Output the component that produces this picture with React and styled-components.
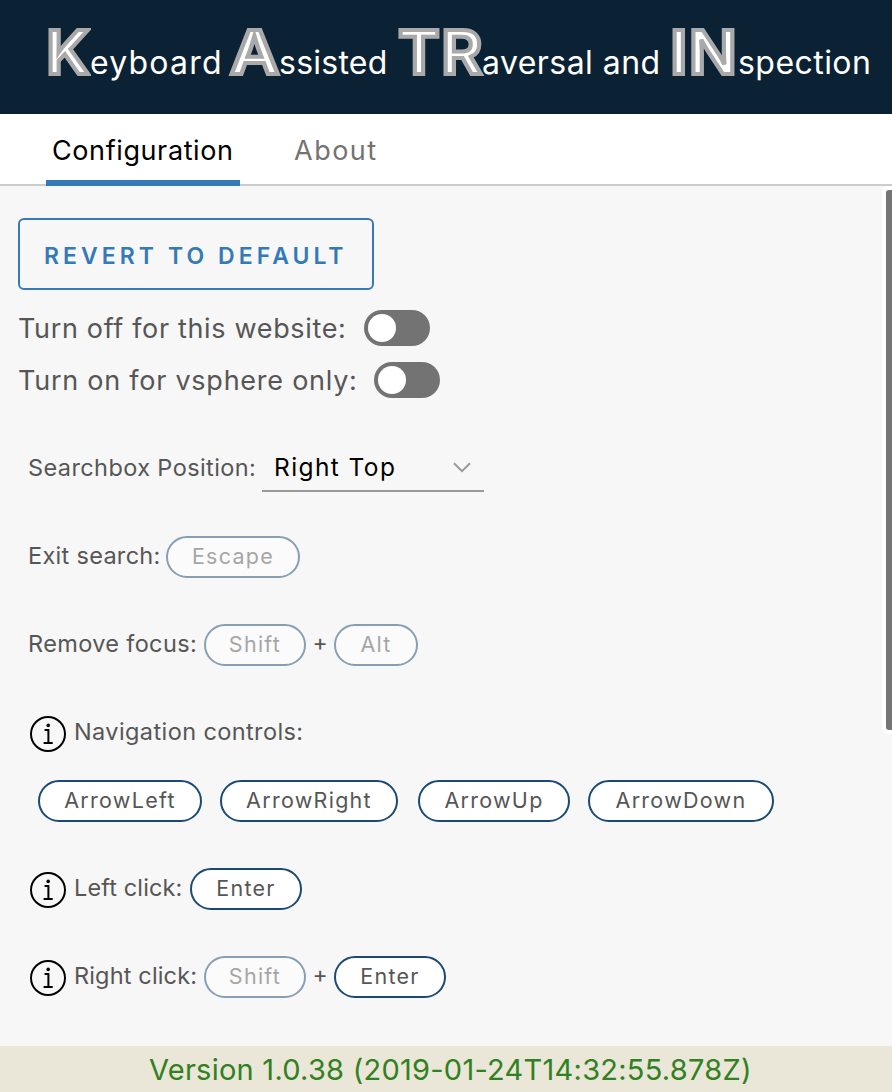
import React from 'react';
import styled, { createGlobalStyle } from 'styled-components';

const GlobalStyle = createGlobalStyle`
  * { box-sizing: border-box; }
  body {
    margin: 0;
    font-family: Inter, "Liberation Sans", sans-serif;
    color: #565656;
    font-variant-ligatures: none;
  }
`;

const Page = styled.div`
  display: flex;
  flex-direction: column;
  width: 892px;
  height: 1092px;
  overflow: hidden;
  background: #f7f7f7;
`;

const Header = styled.header`
  flex: none;
  display: flex;
  align-items: baseline;
  height: 114px;
  padding: 14px 0 0 46px;
  background: #0b2235;
  color: #fff;
  white-space: pre;
`;

const Initial = styled.span`
  flex: none;
  width: ${(p) => p.$w}px;
  font-size: 60.5px;
  line-height: 76px;
  font-weight: 600;
  letter-spacing: ${(p) => p.$ls || 0}px;
  -webkit-text-stroke: 4px #a9a9a9;
  transform: scaleX(${(p) => p.$stretch || 1});
  transform-origin: left;
`;

const Rest = styled.span`
  flex: none;
  width: ${(p) => p.$w}px;
  font-size: 32px;
  letter-spacing: ${(p) => p.$ls}px;
`;

const TabBar = styled.nav`
  flex: none;
  display: flex;
  gap: 48px;
  height: 72px;
  padding-left: 46px;
  background: #fff;
  box-shadow: inset 0 -2px #ccc;
`;

const Tab = styled.div`
  width: ${(p) => p.$w}px;
  height: 72px;
  padding: 2px 0 0 6px;
  font-size: 27px;
  line-height: 70px;
  letter-spacing: ${(p) => p.$ls}px;
  color: ${(p) => (p.$active ? '#000' : '#737373')};
  box-shadow: ${(p) => (p.$active ? 'inset 0 -6px #347ab8' : 'none')};
  white-space: nowrap;
`;

const Content = styled.main`
  position: relative;
  flex: 1;
  min-height: 0;
  padding: 32px 0 0 18px;
`;

const ScrollThumb = styled.div`
  position: absolute;
  top: 0;
  right: -8px;
  width: 18px;
  height: 548px;
  border: 4px solid #fff;
  border-radius: 7px;
  background: #757575;
`;

const RevertButton = styled.button`
  display: block;
  width: 356px;
  height: 72px;
  padding: 3px 0 0 24px;
  border: 2px solid #347ab8;
  border-radius: 6px;
  background: transparent;
  color: #347ab8;
  font: 600 23px Inter, sans-serif;
  letter-spacing: 4.05px;
  text-align: left;
  white-space: nowrap;
`;

const ToggleRow = styled.label`
  display: flex;
  align-items: center;
  height: 36px;
  margin-top: ${(p) => p.$mt}px;
`;

const ToggleText = styled.span`
  flex: none;
  width: ${(p) => p.$w}px;
  font-size: 27px;
  letter-spacing: ${(p) => p.$ls}px;
  white-space: nowrap;
`;

const Switch = styled.span`
  display: flex;
  width: 66px;
  height: 36px;
  padding: 4px;
  border-radius: 18px;
  background: #737373;
  &::before {
    content: '';
    width: 28px;
    height: 28px;
    border-radius: 50%;
    background: #fff;
  }
`;

const Row = styled.div`
  display: flex;
  align-items: center;
  height: ${(p) => p.$h || 42}px;
  margin-top: ${(p) => p.$mt || 46}px;
  padding-left: ${(p) => p.$pl || 10}px;
`;

const Label = styled.span`
  flex: none;
  width: ${(p) => p.$w}px;
  padding-bottom: ${(p) => p.$pb || 4}px;
  font-size: 23.5px;
  letter-spacing: ${(p) => p.$ls}px;
  white-space: nowrap;
`;

const Select = styled.div`
  display: flex;
  align-items: center;
  justify-content: space-between;
  width: 222px;
  height: 48px;
  padding: 0 13px 0 12px;
  border-bottom: 2px solid #999;
  color: #000;
  font-size: 24.5px;
  letter-spacing: 1.4px;
`;

const Key = styled.span`
  flex: none;
  display: flex;
  align-items: center;
  justify-content: center;
  width: ${(p) => p.$w}px;
  height: 42px;
  margin-left: ${(p) => p.$ml || 0}px;
  padding: 0 0 2px 0;
  border: 2px solid #1a4a73;
  border-radius: 21px;
  background: #fff;
  font-size: 21.5px;
  letter-spacing: 1.27px;
  opacity: ${(p) => (p.$disabled ? 0.5 : 1)};
`;

const Plus = styled.span`
  width: 28px;
  padding-bottom: 5px;
  font-size: 23px;
  text-align: center;
`;

const InfoSvg = styled.svg`
  flex: none;
  width: 36px;
  height: 36px;
  margin: 2px 8px 0 2px;
  fill: none;
  stroke: #000;
  stroke-width: 2;
`;

const Footer = styled.footer`
  flex: none;
  height: 46px;
  padding-left: 149px;
  background: #eae6d8;
  color: #318021;
  font-size: 29px;
  line-height: 47px;
  letter-spacing: 0.25px;
  white-space: nowrap;
`;

const InfoIcon = () => (
  <InfoSvg viewBox="0 0 36 36">
    <circle cx="18" cy="18" r="17" />
    <circle cx="18.2" cy="9.4" r="1.8" fill="#000" stroke="none" />
    <path d="M14.6 13.9H18.4V27M13.6 27.1H22.7" />
  </InfoSvg>
);

export default function App() {
  return (
    <Page>
      <GlobalStyle />
      <Header>
        <Initial $w={44} $stretch={1.03}>K</Initial>
        <Rest $w={140} $ls={1.2}>eyboard</Rest>
        <Initial $w={49} $stretch={1.12}>A</Initial>
        <Rest $w={119} $ls={0.25}>ssisted</Rest>
        <Initial $w={84} $ls={1} $stretch={1.05}>TR</Initial>
        <Rest $w={188} $ls={0.45}>aversal and</Rest>
        <Initial $w={68} $ls={1} $stretch={1.05}>IN</Initial>
        <Rest $w={140} $ls={0.45}>spection</Rest>
      </Header>
      <TabBar>
        <Tab $w={194} $ls={0.6} $active>Configuration</Tab>
        <Tab $w={96} $ls={1.5}>About</Tab>
      </TabBar>
      <Content>
        <RevertButton>REVERT TO DEFAULT</RevertButton>
        <ToggleRow $mt={20}>
          <ToggleText $w={346} $ls={0.66}>Turn off for this website:</ToggleText>
          <Switch />
        </ToggleRow>
        <ToggleRow $mt={16}>
          <ToggleText $w={356} $ls={0.75}>Turn on for vsphere only:</ToggleText>
          <Switch />
        </ToggleRow>
        <Row $h={48}>
          <Label $w={234} $pb={2} $ls={0.4}>Searchbox Position:</Label>
          <Select>
            Right Top
            <svg width="18" height="11" viewBox="0 0 18 11" fill="none" stroke="#999" strokeWidth="2">
              <path d="M1 1.2L9 9.2L17 1.2" />
            </svg>
          </Select>
        </Row>
        <Row $mt={44}>
          <Label $w={138} $ls={0.3}>Exit search:</Label>
          <Key $w={134} $disabled>Escape</Key>
        </Row>
        <Row>
          <Label $w={176} $ls={0.36}>Remove focus:</Label>
          <Key $w={102} $disabled>Shift</Key>
          <Plus>+</Plus>
          <Key $w={84} $disabled>Alt</Key>
        </Row>
        <Row>
          <InfoIcon />
          <Label $w={232} $ls={0.4}>Navigation controls:</Label>
        </Row>
        <Row $mt={26} $pl={20}>
          <Key $w={164}>ArrowLeft</Key>
          <Key $w={178} $ml={18}>ArrowRight</Key>
          <Key $w={152} $ml={20}>ArrowUp</Key>
          <Key $w={186} $ml={18}>ArrowDown</Key>
        </Row>
        <Row>
          <InfoIcon />
          <Label $w={116} $ls={0.12}>Left click:</Label>
          <Key $w={112}>Enter</Key>
        </Row>
        <Row>
          <InfoIcon />
          <Label $w={130} $ls={0.15}>Right click:</Label>
          <Key $w={102} $disabled>Shift</Key>
          <Plus>+</Plus>
          <Key $w={112}>Enter</Key>
        </Row>
        <ScrollThumb />
      </Content>
      <Footer>Version 1.0.38 (2019-01-24T14:32:55.878Z)</Footer>
    </Page>
  );
}
